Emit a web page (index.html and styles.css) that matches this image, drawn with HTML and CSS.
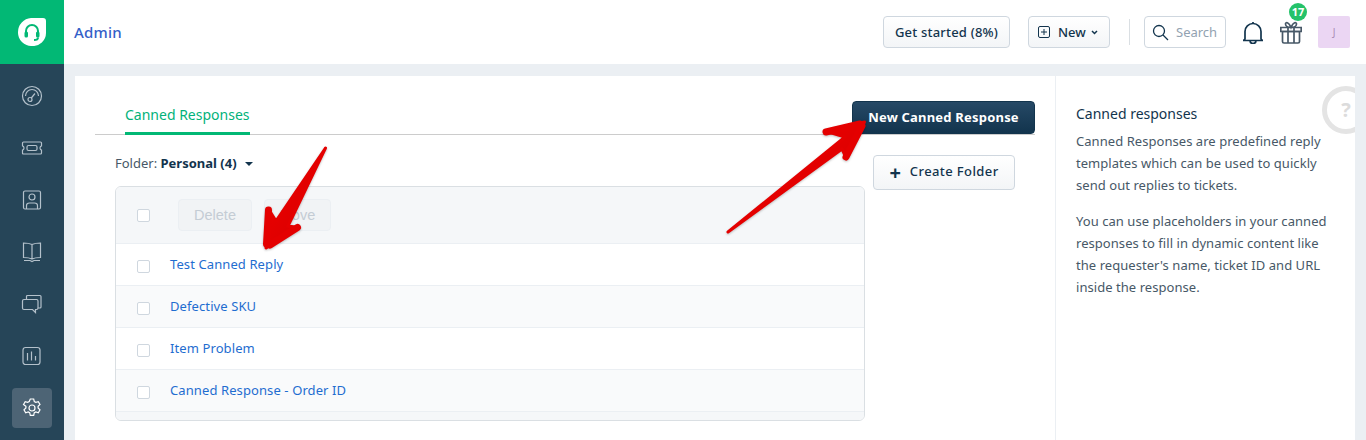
FILE: index.html
```html
<!DOCTYPE html>
<html lang="en">
<head>
<meta charset="utf-8">
<title>Canned Responses</title>
<link rel="stylesheet" href="styles.css">
</head>
<body>
<div class="app">
  <nav class="sidebar">
    <div class="logo">
      <svg width="28" height="28" viewBox="0 0 28 28"><path class="logo-drop" d="M13 0H25a3 3 0 0 1 3 3V15A13 13 0 0 1 14 28 13.500 13.500 0 0 1 0 14 14 14 0 0 1 13 0Z"/><path class="logo-head" d="M8 17V13a6 6 0 0 1 12 0V17"/><rect class="logo-fill" x="6.500" y="13.500" width="3.500" height="6" rx="1.500"/><rect class="logo-fill" x="18" y="13.500" width="3.500" height="6" rx="1.500"/><path class="logo-head" d="M20 19.500q0 2.500-4 2.500"/></svg>
    </div>
    <ul class="nav">
      <li class="nav-item"><svg width="22" height="22" viewBox="0 0 22 22"><circle cx="11" cy="11" r="9.500"/><path d="M4.500 11a6.500 6.500 0 0 1 13 0"/><circle cx="9" cy="14.500" r="2"/><path d="M10.300 13 14 8.500"/></svg></li>
      <li class="nav-item"><svg width="22" height="22" viewBox="0 0 22 22"><path d="M2.500 5H19.500Q20.500 5 20.500 6V8.800Q19 9.200 19 11T20.500 13.200V16Q20.500 17 19.500 17H2.500Q1.500 17 1.500 16V13.200Q3 12.800 3 11T1.500 8.800V6Q1.500 5 2.500 5Z"/><rect x="6" y="8.500" width="10" height="5" rx="1.500"/></svg></li>
      <li class="nav-item"><svg width="22" height="22" viewBox="0 0 22 22"><rect x="2.500" y="2" width="17" height="18" rx="1.500"/><circle cx="11" cy="8" r="3"/><path d="M5.500 20V16.500q0-2.500 3-2.500h5q3 0 3 2.500V20"/></svg></li>
      <li class="nav-item"><svg width="22" height="22" viewBox="0 0 22 22"><path d="M11 3.500Q8 2 2.500 2V16.500Q8 16.500 11 18 14 16.500 19.500 16.500V2Q14 2 11 3.500ZM11 3.500V18M3 19.500H9L11 20.500 13 19.500H19"/></svg></li>
      <li class="nav-item"><svg width="22" height="22" viewBox="0 0 22 22"><path d="M5.500 6.500V3.500q0-1 1-1H19q1 0 1 1V14q0 1-1 1H17"/><path d="M3 6.500H15.500q1.500 0 1.500 1.500V15q0 1.500-1.500 1.500H14.500V19.500L11.500 16.500H3q-1.500 0-1.500-1.500V8q0-1.500 1.500-1.500Z"/></svg></li>
      <li class="nav-item"><svg width="22" height="22" viewBox="0 0 22 22"><rect x="2" y="2.500" width="17" height="17" rx="2.500"/><path d="M6.500 8V15.500M10.500 6.500V15.500M14.500 11V15.500"/></svg></li>
      <li class="nav-item nav-active"><svg width="22" height="22" viewBox="0 0 22 22"><circle cx="11" cy="11" r="3"/><path d="M9.300 2h3.400l.6 2.600 1.500.8 2.500-.8 1.700 2.900-1.900 1.800v1.700l1.900 1.800-1.700 2.900-2.500-.8-1.500.8-.6 2.600H9.300l-.6-2.600-1.500-.8-2.500.8-1.700-2.900 1.900-1.800V9.300L2.500 7.500l1.700-2.900 2.500.8 1.500-.8Z"/></svg></li>
    </ul>
  </nav>
  <div class="main">
    <header class="topbar">
      <h1 class="page-title">Admin</h1>
      <div class="top-actions">
        <button class="btn btn-started">Get started (8%)</button>
        <button class="btn btn-new">
          <svg width="12" height="12" viewBox="0 0 12 12"><rect x=".5" y=".5" width="11" height="11" rx="1.500"/><path d="M6 3V9M3 6H9"/></svg>
          <span>New</span>
          <svg class="chev" width="7" height="5" viewBox="0 0 7 5"><path d="M1 1 3.500 3.500 6 1"/></svg>
        </button>
        <span class="divider"></span>
        <div class="search">
          <svg width="17" height="17" viewBox="0 0 17 17"><circle cx="7" cy="7" r="5.500"/><path d="M11 11 16 16"/></svg>
          <span>Search</span>
        </div>
        <svg class="bell" width="20" height="23" viewBox="0 0 20 23"><path d="M2 18V10.500a8 8 0 0 1 16 0V18L19.500 19.500H.5Z"/><path d="M10 2.500V1M7 19.500a3 3 0 0 0 6 0"/></svg>
        <div class="gift">
          <svg width="22" height="23" viewBox="0 0 22 23"><path d="M2.500 10.500H19.500V20.500Q19.500 22 18 22H4Q2.500 22 2.500 20.500Z"/><path d="M.8 6.500H21.200V10.500H.8ZM8 6.500V22M14 6.500V22M11 6.500C8 6.500 5.500 5 5.500 3S8.500 .5 11 6.500C13.500 .5 16.500 1 16.500 3S14 6.500 11 6.500Z"/></svg>
          <span class="badge">17</span>
        </div>
        <div class="avatar">J</div>
      </div>
    </header>
    <div class="content">
      <section class="panel">
        <div class="tab-row">
          <div class="tab">Canned Responses</div>
          <button class="btn-primary">New Canned Response</button>
        </div>
        <div class="body-row">
          <div class="list-col">
            <div class="folder">Folder: <b>Personal (4)</b><i class="caret"></i></div>
            <div class="table">
              <div class="row row-head">
                <span class="check"></span>
                <span class="ghost ghost-delete">Delete</span>
                <span class="ghost ghost-move">Move</span>
              </div>
              <div class="row"><span class="check"></span><a class="link">Test Canned Reply</a></div>
              <div class="row row-alt"><span class="check"></span><a class="link">Defective SKU</a></div>
              <div class="row"><span class="check"></span><a class="link">Item Problem</a></div>
              <div class="row row-alt"><span class="check"></span><a class="link">Canned Response - Order ID</a></div>
              <div class="table-foot"></div>
            </div>
          </div>
          <button class="btn btn-folder"><span class="plus">+</span><span class="folder-label">Create Folder</span></button>
        </div>
      </section>
      <aside class="help">
        <h2>Canned responses</h2>
        <p>Canned Responses are predefined reply templates which can be used to quickly send out replies to tickets.</p>
        <p>You can use placeholders in your canned responses to fill in dynamic content like the requester's name, ticket ID and URL inside the response.</p>
        <div class="help-ring"><span class="help-mark">?</span></div>
      </aside>
    </div>
  </div>
</div>
<svg class="arrows" width="1366" height="440" viewBox="0 0 1366 440">
  <defs>
    <linearGradient id="red" x1="0" y1="0" x2="1" y2="1"><stop offset="0" stop-color="#f20000"/><stop offset="1" stop-color="#d20000"/></linearGradient>
  </defs>
  <g class="arrow-group">
    <path class="arrow" d="M325.500 148 276 221 268.500 209 266 248 299 227.500 288 226Z"/>
    <path class="arrow-barb" d="M268.500 210 266.500 244M297.500 227.500 270 245"/>
  </g>
  <g class="arrow-group">
    <path class="arrow" d="M728 232 845 137 825 131 864.500 122 846 158 842 149Z"/>
    <path class="arrow-barb" d="M826 132 860 124M846 157 862 126"/>
  </g>
</svg>
</body>
</html>
```
FILE: styles.css
```css
* { box-sizing: border-box; }
html, body { margin: 0; height: 440px; overflow: hidden; }
body { font-family: "Noto Sans", "Liberation Sans", sans-serif; font-size: 13px; color: #12344d; background: #ebeff3; position: relative; }
button { font-family: inherit; cursor: pointer; }
ul { list-style: none; margin: 0; padding: 0; }

.app { display: flex; height: 440px; }

.sidebar { width: 64px; flex: none; background: #264558; }
.logo { height: 64px; background: #02b875; display: flex; align-items: center; justify-content: center; }
.logo-drop { fill: #fff; }
.logo-head { fill: none; stroke: #02b875; stroke-width: 2; }
.logo-fill { fill: #02b875; }

.nav { display: flex; flex-direction: column; align-items: center; padding-top: 12px; gap: 12px; }
.nav-item { width: 40px; height: 40px; border-radius: 4px; display: flex; align-items: center; justify-content: center; }
.nav-item svg { fill: none; stroke: #b4c1cb; stroke-width: 1.200; }
.nav-active { background: #4d6475; }
.nav-active svg { stroke: #fff; }

.main { flex: 1; min-width: 0; display: flex; flex-direction: column; }

.topbar { height: 64px; flex: none; background: #fff; display: flex; align-items: center; justify-content: space-between; padding: 0 16px 0 10px; }
.page-title { margin: 0; font-size: 15px; font-weight: 500; letter-spacing: .2px; color: #3460c8; }
.top-actions { display: flex; align-items: center; }

.btn { height: 32px; border: 1px solid #cfd7df; border-radius: 4px; background: linear-gradient(#fff, #f3f5f7); color: #12344d; font-size: 13px; font-weight: 500; display: flex; align-items: center; padding: 0; }
.btn-started { width: 127px; justify-content: center; letter-spacing: .2px; }
.btn-new { width: 82px; margin-left: 18px; padding-left: 9px; }
.btn-new svg { fill: none; stroke: #12344d; stroke-width: 1; }
.btn-new span { margin-left: 8px; }
.btn-new .chev { margin-left: 5px; stroke-width: 1.500; }

.divider { width: 1px; height: 26px; background: #dadfe3; margin: 0 14px 0 19px; }
.search { width: 82px; height: 32px; border: 1px solid #cfd7df; border-radius: 4px; display: flex; align-items: center; padding-left: 7px; gap: 7px; color: #92a2b1; font-size: 13px; }
.search svg { fill: none; stroke: #12344d; stroke-width: 1.300; flex: none; }

.bell { margin-left: 17px; fill: none; stroke: #12344d; stroke-width: 1.700; }
.gift { position: relative; margin-left: 17px; width: 22px; height: 23px; }
.gift svg { fill: none; stroke: #475867; stroke-width: 1.700; display: block; }
.badge { position: absolute; top: -18px; left: 9px; width: 18px; height: 18px; border-radius: 50%; background: #24c26a; color: #fff; font-size: 11px; font-weight: 700; text-align: center; line-height: 18px; }
.avatar { width: 32px; height: 32px; margin-left: 16px; border-radius: 2px; background: #ebd6f3; color: #a98cb3; font-size: 10px; display: flex; align-items: center; justify-content: center; }

.content { flex: 1; min-height: 0; margin: 12px 11px 0; background: #fff; display: flex; }
.panel { width: 981px; flex: none; border-right: 1px solid #ebeff3; padding: 0 20px; }

.tab-row { height: 59px; border-bottom: 1px solid #cccccc; display: flex; align-items: flex-end; justify-content: space-between; }
.tab { margin: 0 0 -1px 30px; height: 34px; padding-top: 4px; border-bottom: 3px solid #02b875; color: #02b27a; font-size: 14px; }
.btn-primary { width: 183px; height: 33px; margin-bottom: 0; padding: 0 0 2px; border: 1px solid #12344d; border-radius: 4px; background: linear-gradient(#264966, #12344d); color: #fff; font-size: 13px; font-weight: 700; letter-spacing: .2px; }

.body-row { display: flex; padding: 0 20px; }
.list-col { width: 750px; flex: none; }
.folder { height: 51px; padding-top: 19px; font-size: 13px; color: #475867; }
.folder b { color: #12344d; font-weight: 700; }
.caret { display: inline-block; margin-left: 8px; vertical-align: 2px; border: 4.500px solid transparent; border-top-color: #12344d; border-bottom: 0; }

.table { border: 1px solid #dadfe3; border-radius: 6px; overflow: hidden; }
.row { height: 42px; display: flex; align-items: center; padding-left: 21px; border-bottom: 1px solid #ebeff3; background: #fff; }
.row-alt { background: #f9fafb; }
.row-head { height: 57px; background: #f5f7f9; gap: 0; }
.check { width: 13px; height: 13px; flex: none; border: 1px solid #cfd7df; border-radius: 2px; background: #fff; margin-top: 4px; }
.row-head .check { margin-top: 0; }
.link { margin-left: 20px; color: #1f6dd0; font-size: 13px; letter-spacing: .1px; margin-top: -1px; }
.ghost { height: 32px; border: 1px solid #ebeff3; border-radius: 4px; background: #f1f3f5; color: #c4ccd4; font-family: "Liberation Sans", sans-serif; font-size: 14.500px; display: flex; align-items: center; justify-content: center; }
.ghost-delete { width: 74px; margin-left: 28px; }
.ghost-move { width: 67px; margin-left: 12px; }
.table-foot { height: 8px; background: #f5f7f9; }

.btn-folder { width: 142px; height: 35px; margin: 20px 0 0 8px; justify-content: center; padding-bottom: 3px; }
.folder-label { letter-spacing: .4px; }
.plus { font-size: 20px; font-weight: 700; margin-right: 9px; line-height: 1; margin-top: 3px; }

.help { flex: 1; position: relative; overflow: hidden; padding: 29px 15px 0 20px; }
.help h2 { margin: 0 0 7px; font-size: 14px; font-weight: 400; line-height: 18px; color: #12344d; }
.help p { margin: 0 0 14px; font-size: 13px; line-height: 22px; letter-spacing: .05px; color: #475867; }
.help-ring { position: absolute; top: 10px; right: -15px; width: 48px; height: 48px; border: 5px solid #e4e4e4; border-radius: 50%; color: #dcdcdc; font-size: 20px; font-weight: 700; display: flex; align-items: center; justify-content: center; background: #fff; }
.help-mark { line-height: 1; }

.arrows { position: absolute; top: 0; left: 0; pointer-events: none; }
.arrow-group { filter: drop-shadow(0 1px 1px rgba(0, 0, 0, .25)); }
.arrow { fill: url(#red); stroke: #e40000; stroke-width: 3; stroke-linejoin: round; }
.arrow-barb { fill: none; stroke: #e40000; stroke-width: 7; stroke-linecap: round; }
```
